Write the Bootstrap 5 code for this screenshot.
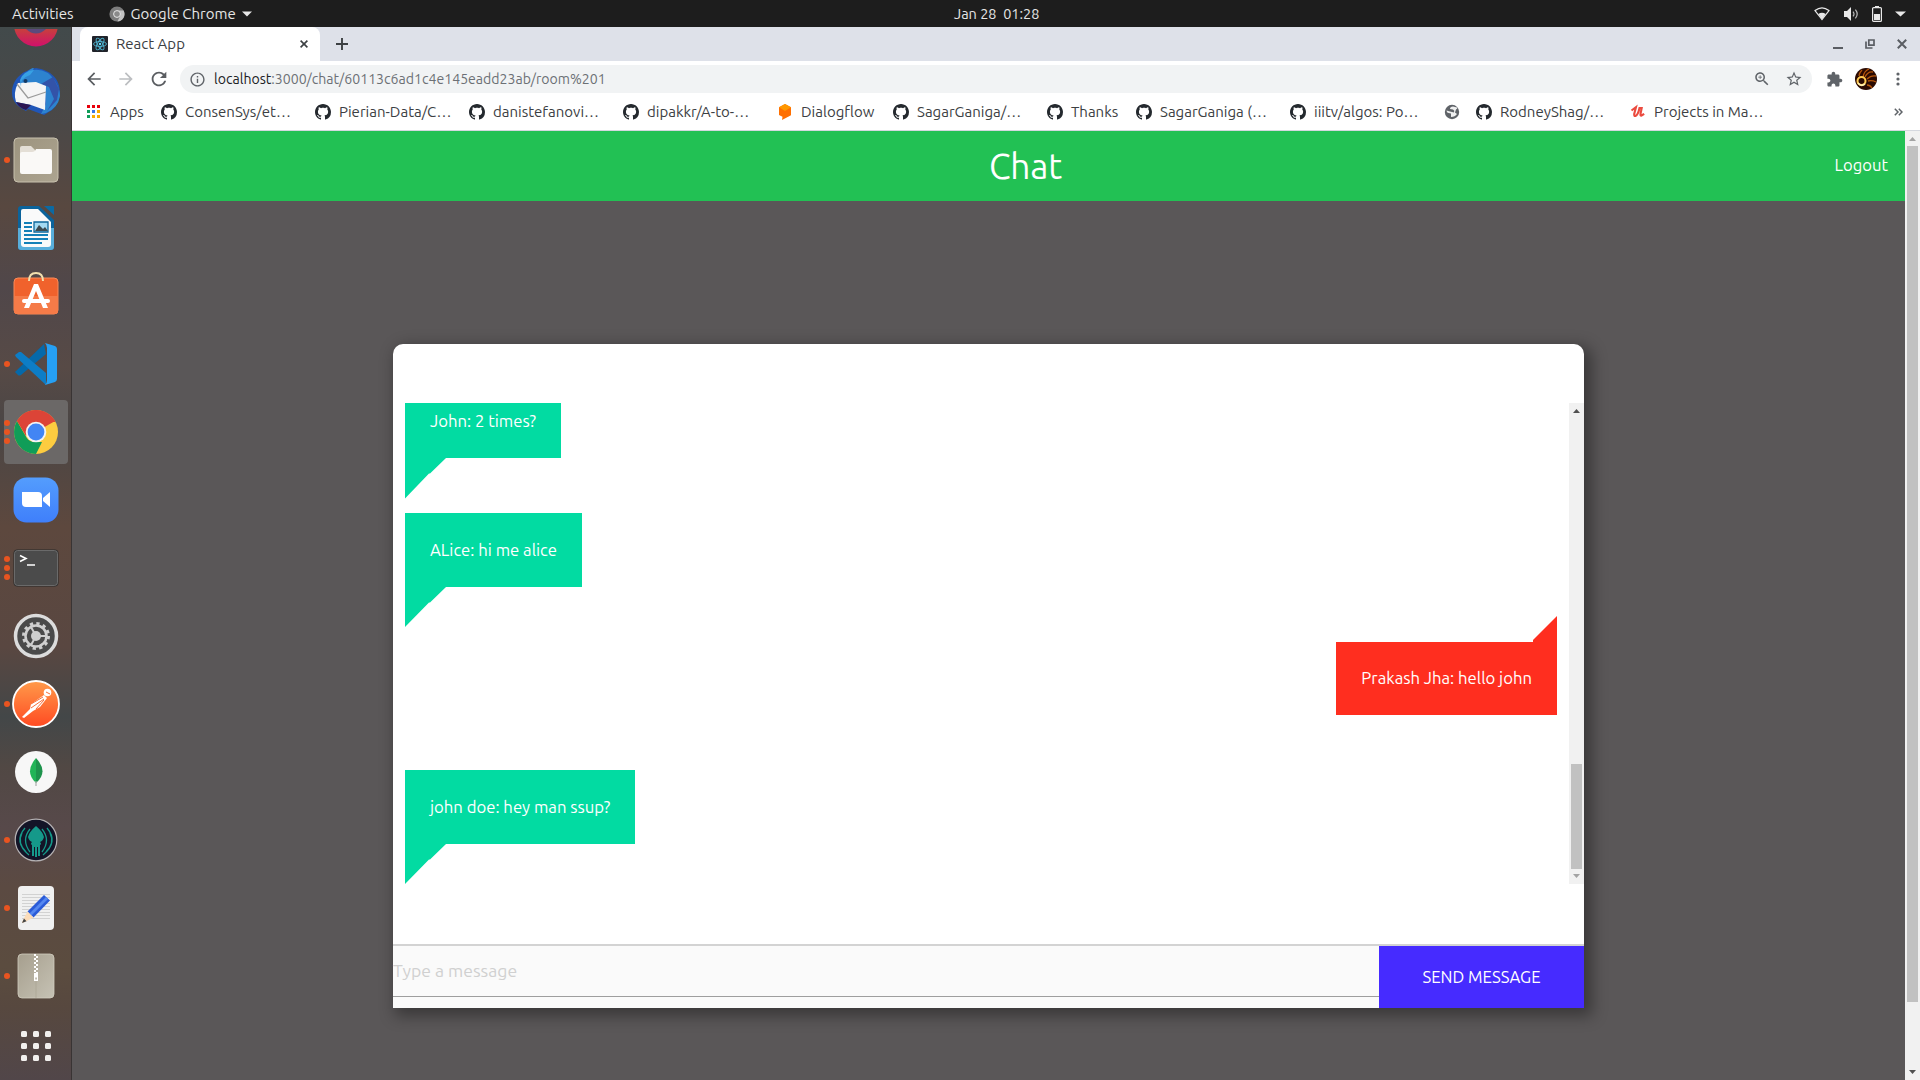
<!DOCTYPE html>
<html lang="en">
<head>
<meta charset="utf-8">
<title>React App</title>
<link href="https://cdn.jsdelivr.net/npm/bootstrap@5.3.0/dist/css/bootstrap.min.css" rel="stylesheet">
<style>
  body { width: 1920px; height: 1080px; overflow: hidden; font-family: Ubuntu, "Noto Sans", sans-serif; font-size: 15px; line-height: 1.2; color: #3c4043; background: #5a5758; }
  svg { display: block; flex: none; }
  span { white-space: pre; }

  .system-bar { height: 27px; background: #1d1d1d; color: #e6e6e6; padding: 0 14px 0 12px; }
  .system-left { width: 942px; }
  .focus-app { margin-left: 35px; gap: 6px; }
  .clock-text { font-size: 14.5px; }
  .system-tray { gap: 13px; }

  .dock { width: 72px; background: linear-gradient(180deg, #424a4b 0, #4b4847 100px, #584840 180px, #50474a 260px, #574a46 340px, #4a4645 400px, #5d483e 500px, #594741 620px, #434748 690px, #514844 740px, #57494a 800px, #5b4a42 860px, #5b4c3f 940px, #57483f 980px, #514649 1053px); border-right: 1px solid #393434; }
  .dock-cell { height: 68px; flex: none; padding-left: 4px; }
  .dock-first { height: 31px; padding-top: 2px; }
  .dock-active { height: 64px; width: 64px; margin-left: -8px; border-radius: 4px; background: #6b6867; }
  .dock-dots { width: 6px; margin-right: 2px; gap: 3px; z-index: 1; }
  .dock-dots i { width: 6px; height: 6px; border-radius: 50%; background: #e95420; }

  .tab-strip { height: 34px; background: #dee1e9; padding-left: 8px; padding-right: 13px; }
  .page-tab { width: 240px; height: 34px; background: #fff; border-radius: 8px 8px 0 0; padding: 0 12px; }
  .win-buttons { gap: 22px; }
  .toolbar { height: 36px; background: #fff; padding: 0 14px 0 12px; }
  .nav-buttons { gap: 12px; }
  .address { width: 1632px; height: 28px; border-radius: 14px; background: #f1f3f4; margin-left: 10px; padding: 0 9px; color: #6c7075; font-size: 14.1px; }
  .address b { font-weight: 400; color: #202124; }
  .addr-star { margin-left: 14px; }
  .tool-ext { margin-left: 14px; }
  .tool-face { margin-left: 12px; }
  .tool-menu { margin-left: 19px; }
  .bookmarks { height: 34px; background: #fff; border-bottom: 1px solid #d5d8df; padding: 0 17px 3px 14px; }
  .bm { width: 154px; gap: 8px; flex: none; }
  .bm-apps { width: 75px; }
  .bm-dialog { width: 116px; }
  .bm-thanks { width: 89px; }
  .bm-globe { width: 32px; }

  .app-bar { height: 70px; background: #22c154; color: #fff; padding: 0 17px 0 0; }
  .app-title { font-size: 35.2px; margin-left: 917px; letter-spacing: -.2px; }
  .app-text { font-size: 16.6px; }
  .page-scroll { width: 15px; background: #f1f1f1; }
  .page-thumb { height: 856px; width: 11px; background: #c1c1c1; }

  .chat-card { width: 1191px; height: 664px; margin: 143px 0 0 321px; background: #fff; border-radius: 10px 10px 0 0; box-shadow: 5px 5px 15px 3px rgba(0,0,0,.36); }
  .chat-body { height: 481px; margin-top: 59px; overflow: hidden; }
  .chat-list { padding: 0 12px; }
  .bubble { position: relative; flex: none; height: 74px; padding: 0 25px; color: #fff; font-size: 16.7px; margin-bottom: 55px; }
  .bubble-in { background: #02dba2; align-self: flex-start; }
  .bubble-out { background: #ff2e1f; align-self: flex-end; height: 73px; }
  .bubble-cut { margin-top: -19px; }
  .bubble-in svg { position: absolute; left: 0; top: 100%; }
  .bubble-out svg { position: absolute; right: 0; bottom: 100%; }
  .chat-scroll { width: 15px; background: #f1f1f1; }
  .chat-thumb { width: 11px; height: 105px; background: #c1c1c1; margin-top: auto; }
  .chat-foot { height: 64px; margin-top: 60px; border-top: 2px solid #d3d3d3; background: #fafafa; }
  .chat-input { height: 51px; border-bottom: 1px solid #9e9e9e; color: #d0d0d0; font-size: 17.6px; }
  .chat-send { width: 205px; background: #462bff; color: #fff; font-size: 16.7px; border: 0; border-radius: 0; }
</style>
<script src="https://cdn.jsdelivr.net/npm/bootstrap@5.3.0/dist/js/bootstrap.bundle.min.js"></script>
</head>
<body class="d-flex flex-column">
<svg width="0" height="0" class="position-absolute">
  <defs>
    <symbol id="gh" viewBox="0 0 16 16"><path d="M8 0C3.58 0 0 3.58 0 8c0 3.54 2.29 6.53 5.47 7.59.4.07.55-.17.55-.38 0-.19-.01-.82-.01-1.49-2.01.37-2.53-.49-2.69-.94-.09-.23-.48-.94-.82-1.13-.28-.15-.68-.52-.01-.53.63-.01 1.08.58 1.23.82.72 1.21 1.87.87 2.33.66.07-.52.28-.87.51-1.07-1.78-.2-3.64-.89-3.64-3.95 0-.87.31-1.59.82-2.15-.08-.2-.36-1.02.08-2.12 0 0 .67-.21 2.2.82.64-.18 1.32-.27 2-.27.68 0 1.36.09 2 .27 1.53-1.04 2.2-.82 2.2-.82.44 1.1.16 1.92.08 2.12.51.56.82 1.27.82 2.15 0 3.07-1.87 3.75-3.65 3.95.29.25.54.73.54 1.48 0 1.07-.01 1.93-.01 2.2 0 .21.15.46.55.38A8.013 8.013 0 0016 8c0-4.42-3.58-8-8-8z" fill="#24292e"/></symbol>
    <linearGradient id="gZoom" x2="0" y2="1"><stop stop-color="#549dfd"/><stop offset="1" stop-color="#3f7ffb"/></linearGradient>
    <linearGradient id="gPost" x2="0" y2="1"><stop stop-color="#ff9a4a"/><stop offset="1" stop-color="#ff4a22"/></linearGradient>
    <linearGradient id="gFox" x2="0" y2="1"><stop offset=".1" stop-color="#a8503c"/><stop offset=".6" stop-color="#c8403c"/><stop offset="1" stop-color="#d0106c"/></linearGradient>
    <linearGradient id="gTan" x1="0" x2="1" y2="1"><stop stop-color="#9d947f"/><stop offset="1" stop-color="#aca490"/></linearGradient>
    <linearGradient id="gArc" x2="1" y2="1"><stop stop-color="#a69f8e"/><stop offset="1" stop-color="#c6c2b4"/></linearGradient>
  </defs>
</svg>

<header class="system-bar d-flex align-items-center">
  <div class="system-left d-flex align-items-center">
    <span>Activities</span>
    <div class="focus-app d-flex align-items-center">
      <svg width="16" height="16" viewBox="0 0 16 16"><circle cx="8" cy="8" r="7.6" fill="#7d7d7d"/><path d="M8 4.4h6.6A7.6 7.6 0 0 1 8.4 15.6L11.2 10z" fill="#c4c4c4"/><circle cx="8" cy="8" r="3.4" fill="#8a8a8a" stroke="#e8e8e8" stroke-width="1"/></svg>
      <span>Google Chrome</span>
      <svg width="10" height="6" viewBox="0 0 10 6"><path d="M0 .5h10L5 5.5z" fill="#e8e8e8"/></svg>
    </div>
  </div>
  <span class="clock-text">Jan 28  01:28</span>
  <div class="system-tray d-flex align-items-center ms-auto">
    <svg width="16" height="14" viewBox="0 0 16 14"><path d="M1 3.6Q8-1.800 15 3.600L8 12.600z" fill="none" stroke="#e8e8e8" stroke-width="1.200"/><path d="M4.300 6.900Q8 4.600 11.700 6.900L8 12.600z" fill="#e8e8e8"/></svg>
    <svg width="16" height="14" viewBox="0 0 16 14"><path d="M1 4h3l4-4v14L4 10H1z" fill="#e8e8e8"/><path d="M10 4.600q2 2.400 0 4.800M12.400 2.600q3.600 4.400 0 8.800" fill="none" stroke="#bbb" stroke-width="1.200"/></svg>
    <svg width="10" height="16" viewBox="0 0 10 16"><path d="M3 0h4v1.500H3zM2 8h6v6H2z" fill="#e8e8e8"/><rect x=".6" y="1.600" width="8.800" height="13.800" rx="1" fill="none" stroke="#e8e8e8" stroke-width="1.200"/></svg>
    <svg width="11" height="6" viewBox="0 0 11 6"><path d="M0 .5h11L5.500 5.500z" fill="#e8e8e8"/></svg>
  </div>
</header>

<div class="d-flex flex-grow-1 overflow-hidden">
  <nav class="dock d-flex flex-column flex-shrink-0 overflow-hidden">
    <div class="dock-cell dock-first d-flex"><div class="dock-dots"></div>
      <svg width="48" height="29" viewBox="0 0 48 29"><circle cx="24" cy="-4.500" r="22" fill="url(#gFox)"/><path d="M14 0h20q-10 9-20 0z" fill="#5b4a7c"/></svg></div>
    <div class="dock-cell d-flex align-items-center"><div class="dock-dots"></div>
      <svg width="48" height="48" viewBox="0 0 48 48"><path d="M24 0C12 2 0 10 0 25c0 10 8 15 14 18l2-2 16 6 8-5q7-6 8-17C48 10 38 2 24 0z" fill="#2056b8"/><path d="M16 3Q24-3 21 2q14-2 22 11 5 8 5 15-2 12-14 17l-5 1 5-10-1-14Q23 16 18 17l-5 3-4-6z" fill="#2d83cf"/><path d="M29 16l8 3 5 12-7 12 10-11 2-11-6-12z" fill="#3353a8"/><path d="M6 15l18-1 10 4-1 24-14-5-15-3Q1 25 6 15z" fill="#f5f5f5"/><path d="M5 16l11 14 18-6" fill="none" stroke="#9b9b9b" stroke-width="1.3"/><path d="M4 34l15 3-5 5q-7-2-10-8z" fill="#2b1552"/><path d="M9 19q-1-9 9-12l4-5Q11 3 8 12z" fill="#37a1e4"/><circle cx="13.500" cy="13" r="2" fill="#143a63"/></svg></div>
    <div class="dock-cell d-flex align-items-center"><div class="dock-dots d-flex flex-column"><i></i></div>
      <svg width="48" height="48" viewBox="0 0 48 48"><rect x="2" y="2" width="44" height="44" rx="4" fill="url(#gTan)" stroke="#c8c1ae"/><path d="M8 12q0-2 2-2h9l4 4v6H8z" fill="#e4dfd6"/><path d="M8 18q0-2 2-2h10q3 0 4-3h14q2 0 2 2v21q0 2-2 2H10q-2 0-2-2z" fill="#faf9f7"/></svg></div>
    <div class="dock-cell d-flex align-items-center"><div class="dock-dots"></div>
      <svg width="48" height="48" viewBox="0 0 48 48"><path d="M9 2h18l15 14v27q0 3-3 3H9q-3 0-3-3V5q0-3 3-3z" fill="#0b639b"/><path d="M6 24h36v19q0 3-3 3H9q-3 0-3-3z" fill="#58aedb"/><path d="M11 5h15l13 13v22q0 3-3 3H12q-3 0-3-3V7q0-2 2-2z" fill="#fafafa"/><path d="M32 2h9q1 0 1 1v8z" fill="#0b6aa3"/><path d="M12 19h8M12 23h8M12 27h8M12 31h24M12 35h24M12 39h18" stroke="#1480b8" stroke-width="2"/><path d="M22 18h14v10H22z" fill="#a4daf2" stroke="#0e679a" stroke-width="1.300"/><path d="M23 27l4-6 4 4 2-2 3 4z" fill="#3e4b50"/></svg></div>
    <div class="dock-cell d-flex align-items-center"><div class="dock-dots"></div>
      <svg width="48" height="48" viewBox="0 0 48 48"><rect x="2" y="6" width="44" height="36" rx="4" fill="#f0622c" stroke="#f98a58"/><path d="M2 24h44v15q0 3-3 3H5q-3 0-3-3z" fill="#f57b48"/><path d="M17 9q0-8 7-8t7 8" fill="none" stroke="#f2dfae" stroke-width="2"/><path d="M12 36l10-24h4l10 24h-5L24 19l-7 17z" fill="#fff"/><path d="M12 29h24" stroke="#fff" stroke-width="4" stroke-linecap="round"/></svg></div>
    <div class="dock-cell d-flex align-items-center"><div class="dock-dots d-flex flex-column"><i></i></div>
      <svg width="48" height="48" viewBox="0 0 48 48"><path d="M4 31l28-27 2 10L9 35q-2 1-3 0l-3-3z" fill="#0569aa"/><path d="M4 17l-1-2 4-3h2l25 21v12z" fill="#0d7dc6"/><path d="M33 3l10 3q2 1 2 3v30q0 2-2 3l-10 3q2-2 2-5V8q0-3-2-5z" fill="#26a0f4"/></svg></div>
    <div class="dock-cell d-flex align-items-center"><div class="dock-dots d-flex flex-column"><i></i><i></i><i></i></div>
      <div class="dock-active d-flex align-items-center justify-content-center">
      <svg width="48" height="48" viewBox="0 0 48 48"><circle cx="24" cy="24" r="22" fill="#fdcc40"/><path d="M24 24L5 13a22 22 0 0 1 38 0z" fill="#dc4437"/><path d="M24 46A22 22 0 0 1 5 13l9.500 16.500Q17 34 24 34h6z" fill="#109d58"/><path d="M24 14h19.500A22 22 0 0 0 5 13l9 15z" fill="#dc4437"/><circle cx="24" cy="24" r="10.300" fill="#f4f4f4"/><circle cx="24" cy="24" r="8.400" fill="#4285f4"/></svg></div></div>
    <div class="dock-cell d-flex align-items-center"><div class="dock-dots"></div>
      <svg width="48" height="48" viewBox="0 0 48 48"><rect x="1.500" y="1.500" width="45" height="45" rx="13" fill="url(#gZoom)"/><path d="M10 16h16q4 0 4 4v11H14q-4 0-4-4z" fill="#fff"/><path d="M31 22l7-6v15l-7-6z" fill="#fff"/></svg></div>
    <div class="dock-cell d-flex align-items-center"><div class="dock-dots d-flex flex-column"><i></i><i></i><i></i></div>
      <svg width="48" height="48" viewBox="0 0 48 48"><rect x="1.500" y="5.500" width="45" height="37" rx="4" fill="#282828"/><rect x="2.500" y="6.500" width="43" height="35" rx="3" fill="#4b4b4b" stroke="#777" stroke-width=".8"/><path d="M8 11.500l6 3-6 3M15 21h8" fill="none" stroke="#fff" stroke-width="1.600"/></svg></div>
    <div class="dock-cell d-flex align-items-center"><div class="dock-dots"></div>
      <svg width="48" height="48" viewBox="0 0 48 48"><circle cx="24" cy="24" r="20.500" fill="#4a4a4a" stroke="#dcdcdc" stroke-width="3.500"/><circle cx="24" cy="24" r="12.500" fill="none" stroke="#cfcfcf" stroke-width="3" stroke-dasharray="3.270 3.270"/><circle cx="24" cy="24" r="10.500" fill="none" stroke="#cfcfcf" stroke-width="2.500"/><circle cx="24" cy="24" r="5" fill="#cfcfcf"/><path d="M24 24h10M24 24l-5-9M24 24l-5 9" stroke="#cfcfcf" stroke-width="2"/></svg></div>
    <div class="dock-cell d-flex align-items-center"><div class="dock-dots d-flex flex-column"><i></i></div>
      <svg width="48" height="48" viewBox="0 0 48 48"><circle cx="24" cy="24" r="23" fill="url(#gPost)" stroke="#fff" stroke-width="1.800"/><circle cx="35.500" cy="12.500" r="3.800" fill="#fff"/><path d="M32 15l3 3-7 9-7 4-9 7-2-1 8-8 1-5z" fill="#fff"/><path d="M19 24l12-7M19 28l13-9M24 29l8-9M34 12l4 2" stroke="#f66f3b" stroke-width="1"/></svg></div>
    <div class="dock-cell d-flex align-items-center"><div class="dock-dots"></div>
      <svg width="48" height="48" viewBox="0 0 48 48"><circle cx="24" cy="24" r="21" fill="#f7f7f7"/><path d="M24 10q-12 14 0 25z" fill="#21b457"/><path d="M24 10q13 14 0 25z" fill="#1d934c"/><path d="M24 33v5" stroke="#aaa" stroke-width="1.200"/></svg></div>
    <div class="dock-cell d-flex align-items-center"><div class="dock-dots d-flex flex-column"><i></i></div>
      <svg width="48" height="48" viewBox="0 0 48 48"><circle cx="24" cy="24" r="20.800" fill="#131427" stroke="#b5b2b4" stroke-width="1.200"/><path d="M24 10q7 6 8 11-1 4-4 5 2 2 0 3v11h-2V31h-1v10h-2V31h-1v9h-2V29q-2-1 0-3-3-1-4-5 1-5 8-11z" fill="#15998a"/><path d="M13 12q-12 14 4 27M35 12q12 14-4 27M10 17q-5 10 4 19M38 17q5 10-4 19M18 13q-9 11 0 23M30 13q9 11 0 23" fill="none" stroke="#15998a" stroke-width="1.300"/></svg></div>
    <div class="dock-cell d-flex align-items-center"><div class="dock-dots d-flex flex-column"><i></i></div>
      <svg width="48" height="48" viewBox="0 0 48 48"><rect x="6" y="2" width="36" height="44" rx="4" fill="#f0f0f0"/><path d="M10 10.500h28M10 13.500h28M10 16.500h28M10 19.500h28M10 22.500h28M10 25.500h28M10 28.500h28M10 31.500h28M10 34.500h28" stroke="#d2d2d2"/><path d="M32 11l6 5.500-16.500 17-6-6z" fill="#2a5bd8"/><path d="M34 13l2 2-17 17-2-2z" fill="#5587f0"/><path d="M15.500 27.500l6 6L11 39l-1-1z" fill="#fbdcb9"/><path d="M12 34.500l2.500 2.800L10 39z" fill="#444"/></svg></div>
    <div class="dock-cell d-flex align-items-center"><div class="dock-dots d-flex flex-column"><i></i></div>
      <svg width="48" height="48" viewBox="0 0 48 48"><rect x="6" y="2" width="36" height="44" rx="4" fill="url(#gArc)" stroke="#d1cdbf" stroke-width=".8"/><path d="M24 22v24" stroke="#a9a493" stroke-width=".7"/><path d="M23 2v20" stroke="#fff" stroke-width="2" stroke-dasharray="2 2"/><path d="M25 4v18" stroke="#fff" stroke-width="2" stroke-dasharray="2 2"/><path d="M22 21h4v8h-4zM23.300 25.500v2h1.500v-2z" fill="#fff" fill-rule="evenodd"/></svg></div>
    <div class="dock-cell d-flex align-items-center"><div class="dock-dots"></div>
      <svg width="48" height="48" viewBox="0 0 48 48"><g fill="#f2f0ee"><rect x="9" y="11" width="6" height="6" rx="1.500"/><rect x="21" y="11" width="6" height="6" rx="1.500"/><rect x="33" y="11" width="6" height="6" rx="1.500"/><rect x="9" y="23" width="6" height="6" rx="1.500"/><rect x="21" y="23" width="6" height="6" rx="1.500"/><rect x="33" y="23" width="6" height="6" rx="1.500"/><rect x="9" y="35" width="6" height="6" rx="1.500"/><rect x="21" y="35" width="6" height="6" rx="1.500"/><rect x="33" y="35" width="6" height="6" rx="1.500"/></g></svg></div>
  </nav>

  <div class="d-flex flex-column flex-grow-1 overflow-hidden">
    <div class="tab-strip d-flex align-items-center">
      <div class="page-tab d-flex align-items-center">
        <svg width="16" height="16" viewBox="0 0 16 16"><rect width="16" height="16" rx="1" fill="#20232a"/><g fill="none" stroke="#4fb3cf" stroke-width=".9"><ellipse cx="8" cy="8" rx="6.500" ry="2.500"/><ellipse cx="8" cy="8" rx="6.500" ry="2.500" transform="rotate(60 8 8)"/><ellipse cx="8" cy="8" rx="6.500" ry="2.500" transform="rotate(120 8 8)"/></g><circle cx="8" cy="8" r="1.200" fill="#61dafb"/></svg>
        <span class="ms-2">React App</span>
        <svg class="ms-auto" width="8" height="8" viewBox="0 0 8 8"><path d="M.6.6l6.800 6.800M7.400.6L.6 7.400" stroke="#3c4043" stroke-width="1.600"/></svg>
      </div>
      <svg class="ms-3" width="12" height="12" viewBox="0 0 12 12"><path d="M6 0v12M0 6h12" stroke="#3c4043" stroke-width="1.900"/></svg>
      <div class="d-flex align-items-center ms-auto win-buttons">
        <svg width="10" height="10" viewBox="0 0 10 10"><path d="M0 9h10" stroke="#5a5d63" stroke-width="2"/></svg>
        <svg width="10" height="10" viewBox="0 0 10 10"><path d="M3.800 1h5.200v5.200H3.800zM1 2.500V9h6.500" fill="none" stroke="#5a5d63" stroke-width="1.700"/></svg>
        <svg width="10" height="10" viewBox="0 0 10 10"><path d="M.8.8l8.400 8.400M9.200.8L.8 9.200" stroke="#5a5d63" stroke-width="2"/></svg>
      </div>
    </div>

    <div class="toolbar d-flex align-items-center">
      <div class="nav-buttons d-flex align-items-center">
        <svg width="20" height="20" viewBox="0 0 24 24"><path d="M20 11H7.830l5.590-5.590L12 4l-8 8 8 8 1.410-1.410L7.830 13H20v-2z" fill="#5a5d61"/></svg>
        <svg width="20" height="20" viewBox="0 0 24 24"><path transform="matrix(-1 0 0 1 24 0)" d="M20 11H7.830l5.590-5.590L12 4l-8 8 8 8 1.410-1.410L7.830 13H20v-2z" fill="#bcbec1"/></svg>
        <svg width="22" height="22" viewBox="0 0 24 24"><path d="M17.650 6.350C16.200 4.900 14.210 4 12 4c-4.420 0-7.990 3.580-7.990 8s3.570 8 7.990 8c3.730 0 6.840-2.550 7.730-6h-2.080c-.82 2.330-3.040 4-5.650 4-3.310 0-6-2.690-6-6s2.690-6 6-6c1.660 0 3.140.69 4.220 1.780L13 11h7V4l-2.350 2.350z" fill="#5a5d61"/></svg>
      </div>
      <div class="address d-flex align-items-center">
        <svg width="17" height="17" viewBox="0 0 24 24"><path d="M11 7h2v2h-2zm0 4h2v6h-2zm1-9C6.480 2 2 6.480 2 12s4.480 10 10 10 10-4.480 10-10S17.520 2 12 2zm0 18c-4.410 0-8-3.590-8-8s3.590-8 8-8 8 3.590 8 8-3.590 8-8 8z" fill="#5f6368"/></svg>
        <span class="ms-2"><b>localhost</b>:3000/chat/60113c6ad1c4e145eadd23ab/room%201</span>
        <svg class="ms-auto" width="18" height="18" viewBox="0 0 24 24"><path d="M15.500 14h-.79l-.28-.27C15.410 12.590 16 11.110 16 9.500 16 5.910 13.090 3 9.500 3S3 5.910 3 9.500 5.910 16 9.500 16c1.610 0 3.090-.59 4.230-1.570l.27.28v.79l5 4.990L20.490 19l-4.990-5zm-6 0C7.010 14 5 11.990 5 9.500S7.010 5 9.500 5 14 7.010 14 9.500 11.990 14 9.500 14zm.5-7H9v2H7v1h2v2h1v-2h2V9h-2z" fill="#5f6368"/></svg>
        <svg class="addr-star" width="18" height="18" viewBox="0 0 24 24"><path d="M22 9.240l-7.190-.62L12 2 9.190 8.630 2 9.240l5.460 4.730L5.820 21 12 17.270 18.180 21l-1.630-7.030L22 9.240zM12 15.400l-3.760 2.270 1-4.280-3.320-2.880 4.380-.38L12 6.100l1.710 4.040 4.380.38-3.320 2.880 1 4.280L12 15.400z" fill="#5f6368"/></svg>
      </div>
      <svg class="tool-ext" width="17" height="17" viewBox="0 0 24 24"><path d="M20.500 11H19V7c0-1.100-.9-2-2-2h-4V3.500C13 2.120 11.880 1 10.500 1S8 2.120 8 3.500V5H4c-1.100 0-1.990.9-1.990 2v3.800H3.500c1.490 0 2.700 1.210 2.700 2.700s-1.210 2.700-2.700 2.700H2V20c0 1.100.9 2 2 2h3.800v-1.500c0-1.490 1.210-2.700 2.700-2.700 1.490 0 2.700 1.210 2.700 2.700V22H17c1.100 0 2-.9 2-2v-4h1.500c1.380 0 2.500-1.120 2.500-2.500S21.880 11 20.500 11z" fill="#5f6368"/></svg>
      <svg class="tool-face" width="22" height="22" viewBox="0 0 22 22"><circle cx="11" cy="11" r="11" fill="#2a0a02"/><path d="M8 9Q9 3 14 1M10 9q3-6 8-5M12 11q4-4 9-3M13 13q4-1 8 1M12 17q3 0 5 3M4 8q0-3 3-6" fill="none" stroke="#b5560c" stroke-width="1.300"/><circle cx="6.500" cy="13" r="4" fill="#2a0a02" stroke="#ffc94f" stroke-width="2"/><path d="M3 15q3 4 7 1" fill="none" stroke="#fff0b0" stroke-width="1.600"/></svg>
      <svg class="tool-menu" width="4" height="14" viewBox="0 0 4 14"><g fill="#5f6368"><circle cx="2" cy="2" r="1.600"/><circle cx="2" cy="7" r="1.600"/><circle cx="2" cy="12" r="1.600"/></g></svg>
    </div>

    <div class="bookmarks d-flex align-items-center">
      <div class="bm bm-apps d-flex align-items-center"><svg width="16" height="16" viewBox="0 0 16 16"><path d="M1 1h3v3H1zM6 1h3v3H6zM11 1h3v3h-3z" fill="#e8000b"/><path d="M1 6h3v3H1zM1 11h3v3H1z" fill="#0f9d58"/><path d="M6 6h3v3H6z" fill="#3b78e7"/><path d="M11 6h3v3h-3zM6 11h3v3H6zM11 11h3v3h-3z" fill="#f9ab00"/></svg><span>Apps</span></div>
      <div class="bm d-flex align-items-center"><svg width="16" height="16"><use href="#gh"/></svg><span>ConsenSys/et…</span></div>
      <div class="bm d-flex align-items-center"><svg width="16" height="16"><use href="#gh"/></svg><span>Pierian-Data/C…</span></div>
      <div class="bm d-flex align-items-center"><svg width="16" height="16"><use href="#gh"/></svg><span>danistefanovi…</span></div>
      <div class="bm d-flex align-items-center"><svg width="16" height="16"><use href="#gh"/></svg><span>dipakkr/A-to-…</span></div>
      <div class="bm bm-dialog d-flex align-items-center"><svg width="16" height="16" viewBox="0 0 16 16"><path d="M8 0l6 3.300v8L5 16l.5-3.200L2 11V3.300z" fill="#ff6f00"/><path d="M8 0l6 3.300L8 7 2 3.300z" fill="#ff9800"/></svg><span>Dialogflow</span></div>
      <div class="bm d-flex align-items-center"><svg width="16" height="16"><use href="#gh"/></svg><span>SagarGaniga/…</span></div>
      <div class="bm bm-thanks d-flex align-items-center"><svg width="16" height="16"><use href="#gh"/></svg><span>Thanks</span></div>
      <div class="bm d-flex align-items-center"><svg width="16" height="16"><use href="#gh"/></svg><span>SagarGaniga (…</span></div>
      <div class="bm d-flex align-items-center"><svg width="16" height="16"><use href="#gh"/></svg><span>iiitv/algos: Po…</span></div>
      <div class="bm bm-globe d-flex align-items-center"><svg width="16" height="16" viewBox="0 0 16 16"><circle cx="8" cy="8" r="7.200" fill="#5f6368"/><path d="M9 2.500q-3 0-3 2.500l3 .5q2 1 1 3l-4-1-3.500-1q0 2 2 2.500l2.500.5v3.500q4 0 6-3l-2-1.500 1-3q2-1 1-2z" fill="#fff" opacity=".9"/></svg></div>
      <div class="bm d-flex align-items-center"><svg width="16" height="16"><use href="#gh"/></svg><span>RodneyShag/…</span></div>
      <div class="bm d-flex align-items-center"><svg width="16" height="16" viewBox="0 0 16 16"><path d="M1.500 6.500L6 3.200 4.200 10q-.3 2.300 1.300 2Q8 11 9.500 4h2.200L10.500 10q-.2 2 1 1.500l2.700-1.700" fill="none" stroke="#eb4b3f" stroke-width="2.100"/></svg><span>Projects in Ma…</span></div>
      <svg class="ms-auto" width="9" height="8" viewBox="0 0 9 8"><path d="M.8.8L4 4 .8 7.200M4.800.8L8 4 4.800 7.200" fill="none" stroke="#5f6368" stroke-width="1.500"/></svg>
    </div>

    <div class="d-flex flex-grow-1 overflow-hidden">
      <main class="flex-grow-1 overflow-hidden">
        <div class="app-bar d-flex align-items-center justify-content-between">
          <span class="app-title">Chat</span><span class="app-text">Logout</span>
        </div>
        <section class="chat-card d-flex flex-column">
          <div class="chat-body d-flex">
            <div class="chat-list d-flex flex-column flex-grow-1">
              <div class="bubble bubble-in bubble-cut d-flex align-items-center"><span>John: 2 times?</span><svg width="41" height="41" viewBox="0 0 41 41"><path d="M0 0h41L25 15.500h-1L0 40.500z" fill="#02dba2"/></svg></div>
              <div class="bubble bubble-in d-flex align-items-center"><span>ALice: hi me alice</span><svg width="41" height="41" viewBox="0 0 41 41"><path d="M0 0h41L25 15.500h-1L0 40z" fill="#02dba2"/></svg></div>
              <div class="bubble bubble-out d-flex align-items-center"><span>Prakash Jha: hello john</span><svg width="24" height="26" viewBox="0 0 24 26"><path d="M24 0v26H0v-2z" fill="#ff2e1f"/></svg></div>
              <div class="bubble bubble-in d-flex align-items-center"><span>john doe: hey man ssup?</span><svg width="41" height="41" viewBox="0 0 41 41"><path d="M0 0h41L25 15.500h-1L0 40z" fill="#02dba2"/></svg></div>
            </div>
            <div class="chat-scroll d-flex flex-column align-items-center">
              <svg width="15" height="15" viewBox="0 0 15 15"><path d="M4 10h7L7.500 6z" fill="#505050"/></svg>
              <div class="chat-thumb"></div>
              <svg width="15" height="15" viewBox="0 0 15 15"><path d="M4 5h7L7.500 9z" fill="#a3a3a3"/></svg>
            </div>
          </div>
          <div class="chat-foot d-flex align-items-stretch">
            <div class="flex-grow-1"><div class="chat-input d-flex align-items-center"><span>Type a message</span></div></div>
            <button class="chat-send d-flex align-items-center justify-content-center"><span>SEND MESSAGE</span></button>
          </div>
        </section>
      </main>
      <div class="page-scroll d-flex flex-column align-items-center">
        <svg width="15" height="15" viewBox="0 0 15 15"><path d="M4 10h7L7.500 6z" fill="#a3a3a3"/></svg>
        <div class="page-thumb"></div>
        <svg class="mt-auto" width="15" height="15" viewBox="0 0 15 15"><path d="M4 5h7L7.500 9z" fill="#505050"/></svg>
      </div>
    </div>
  </div>
</div>
</body>
</html>
